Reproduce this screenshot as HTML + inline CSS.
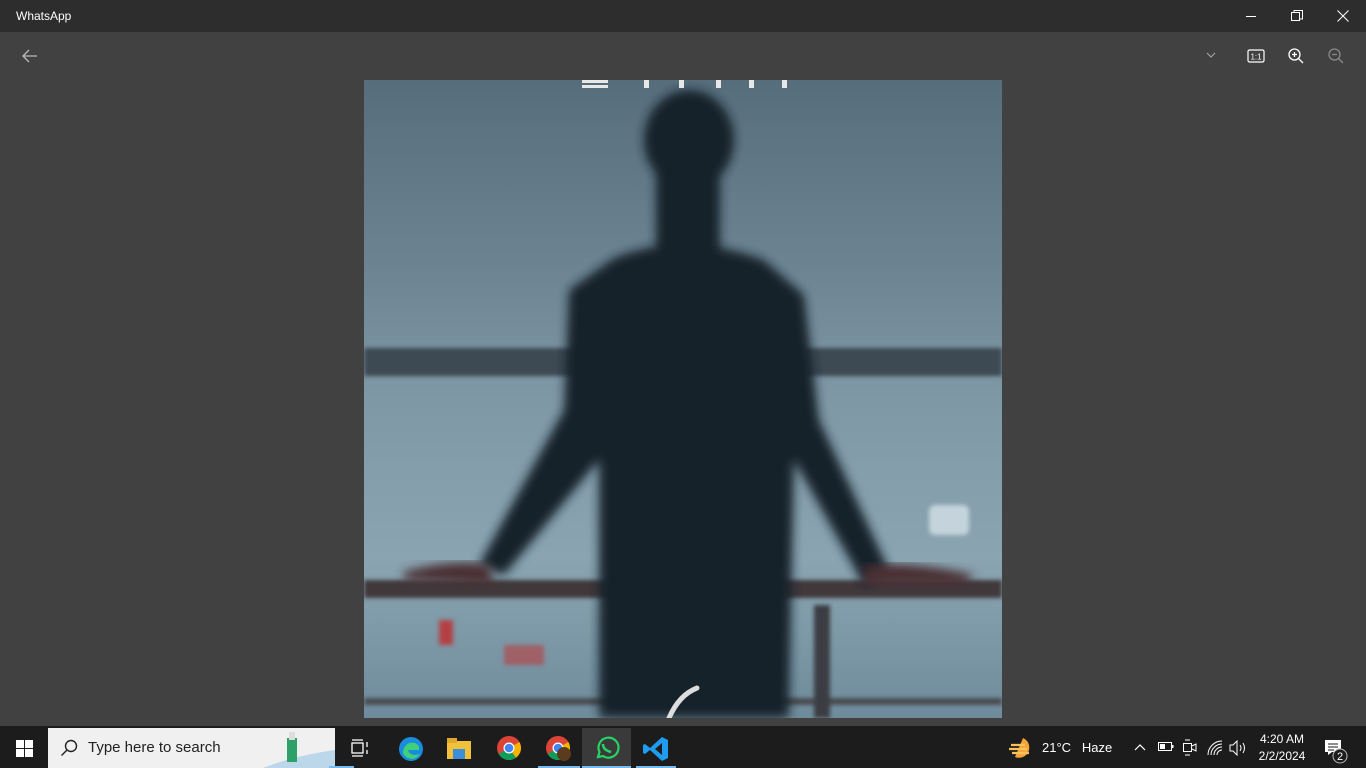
<!DOCTYPE html>
<html><head><meta charset="utf-8"><style>
*{margin:0;padding:0;box-sizing:border-box}
body{width:1366px;height:768px;overflow:hidden;background:#404040;font-family:"Segoe UI","Liberation Sans",sans-serif;position:relative}
.title{position:absolute;left:0;top:0;width:1366px;height:32px;background:#2d2d2d;color:#fff;font-size:12px}
.title span{position:absolute;left:16px;top:9px}
.main{position:absolute;left:0;top:32px;width:1366px;height:694px;background:#414141}
.photo{position:absolute;left:364px;top:80px;width:638px;height:638px}
.tb{position:absolute;left:0;top:726px;width:1366px;height:42px;background:#1c1c1c}
.search{position:absolute;left:48px;top:728px;width:287px;height:40px;background:#f0f0f0;color:#222;font-size:15px;overflow:hidden}
.search span{position:absolute;left:40px;top:11px}
.ic{position:absolute}
.w{color:#fff;font-size:13px;position:absolute}
</style></head><body>
<div class="title"><span>WhatsApp</span>
<svg class="ic" style="left:1246px;top:16px" width="10" height="2"><rect width="10" height="1" fill="#fff"/></svg>
<svg class="ic" style="left:1291px;top:10px" width="12" height="12" fill="none" stroke="#fff"><rect x="0.5" y="2.5" width="8" height="8"/><path d="M3 2.5V0.5H11.5V9H9"/></svg>
<svg class="ic" style="left:1337px;top:10px" width="12" height="12" stroke="#fff"><path d="M0.5 0.5L11.5 11.5M11.5 0.5L0.5 11.5"/></svg>
</div>
<div class="main"></div>
<svg class="ic" style="left:22px;top:49px" width="16" height="14" fill="none" stroke="#bbb" stroke-width="1.3"><path d="M7 1L1 7L7 13M1 7H15"/></svg>
<svg class="ic" style="left:1206px;top:52px" width="10" height="6" fill="none" stroke="#aaa"><path d="M1 1L5 5L9 1"/></svg>
<svg class="ic" style="left:1247px;top:49px" width="18" height="14" fill="none" stroke="#fff" stroke-width="1.2"><rect x="1" y="1" width="16" height="12" rx="1.5"/><text x="9" y="10.5" fill="#fff" stroke="none" font-size="8" text-anchor="middle" font-family="Liberation Sans">1:1</text></svg>
<svg class="ic" style="left:1288px;top:48px" width="16" height="16" fill="none" stroke="#fff" stroke-width="1.3"><circle cx="6.5" cy="6.5" r="5.5"/><path d="M10.5 10.5L15 15M4 6.5H9M6.5 4V9"/></svg>
<svg class="ic" style="left:1328px;top:48px" width="16" height="16" fill="none" stroke="#888" stroke-width="1.3"><circle cx="6.5" cy="6.5" r="5.5"/><path d="M10.5 10.5L15 15M4 6.5H9"/></svg>

<svg class="photo" viewBox="0 0 638 638">
<defs>
<linearGradient id="bg" x1="0" y1="0" x2="0" y2="1"><stop offset="0" stop-color="#566d7b"/><stop offset="0.3" stop-color="#6d8593"/><stop offset="0.5" stop-color="#7f98a5"/><stop offset="0.75" stop-color="#8aa4b1"/><stop offset="1" stop-color="#6f8c9c"/></linearGradient>
<filter id="bl"><feGaussianBlur stdDeviation="5"/></filter>
<filter id="bl2"><feGaussianBlur stdDeviation="2"/></filter>
</defs>
<rect width="638" height="638" fill="url(#bg)"/>
<g filter="url(#bl2)">
<rect x="0" y="268" width="638" height="28" fill="#3e4a52"/>
<rect x="0" y="500" width="638" height="18" fill="#40393a"/>
<rect x="0" y="618" width="638" height="7" fill="#4a4b4f"/>
<rect x="450" y="525" width="16" height="113" fill="#3a3d42"/>
<rect x="565" y="425" width="40" height="30" rx="6" fill="#c5d4dc"/>
<rect x="75" y="540" width="14" height="25" fill="#c02a2a" opacity="0.8"/>
<rect x="140" y="565" width="40" height="20" fill="#b83a3a" opacity="0.6"/>
</g>
<g filter="url(#bl)" fill="#13202b">
<ellipse cx="325" cy="60" rx="45" ry="50"/>
<rect x="292" y="90" width="64" height="80"/>
<path d="M250 178 Q320 150 400 180 L440 215 L455 340 L525 490 L500 505 L430 380 L425 638 L235 638 L235 380 L140 495 L115 485 L200 330 L205 210 Z"/>
</g>
<path d="M40 492 Q90 478 125 485 L130 505 L40 500 Z" fill="#4a2e33" filter="url(#bl)"/>
<path d="M500 486 Q545 480 610 495 L600 505 L500 505 Z" fill="#4a2e33" filter="url(#bl)"/>
<path d="M305 638 Q315 615 333 608" fill="none" stroke="#ddd" stroke-width="5" stroke-linecap="round"/>
<g fill="#e8e8e8"><rect x="218" y="0" width="26" height="3"/><rect x="218" y="5" width="26" height="3"/><rect x="280" y="0" width="5" height="8"/><rect x="315" y="0" width="5" height="8"/><rect x="352" y="0" width="5" height="8"/><rect x="385" y="0" width="5" height="8"/><rect x="418" y="0" width="5" height="8"/></g>
</svg>

<div class="tb"></div>
<svg class="ic" style="left:16px;top:740px" width="17" height="17" fill="#fff"><rect x="0" y="0" width="8" height="8"/><rect x="9" y="0" width="8" height="8"/><rect x="0" y="9" width="8" height="8"/><rect x="9" y="9" width="8" height="8"/></svg>
<div class="search"><svg class="ic" style="left:12px;top:11px" width="18" height="18" fill="none" stroke="#222" stroke-width="1.4"><circle cx="11" cy="7" r="5.5"/><path d="M7 11L1.5 16.5"/></svg><span>Type here to search</span>
<svg class="ic" style="left:215px;top:0" width="72" height="40"><path d="M0 40 Q30 28 72 22 L72 40Z" fill="#bcd6ea"/><rect x="24" y="10" width="10" height="24" fill="#2ea06a"/><rect x="26" y="4" width="6" height="8" fill="#ddd"/></svg></div>
<svg class="ic" style="left:351px;top:739px" width="20" height="18" fill="none" stroke="#fff" stroke-width="1.3"><rect x="1" y="4" width="11" height="10"/><path d="M1 1H12M1 17H12M16 3V8M16 11V15"/></svg>
<svg class="ic" style="left:398px;top:736px" width="26" height="26"><circle cx="13" cy="13" r="12" fill="#1b8be0"/><path d="M5 15 Q8 5 17 7 Q22 9 21 14 L10 14 Q12 21 22 18 Q17 25 10 22 Q4 19 5 15Z" fill="#3fd07a"/></svg>
<svg class="ic" style="left:447px;top:738px" width="24" height="22"><rect x="0" y="3" width="24" height="18" fill="#f2c13a"/><rect x="0" y="0" width="10" height="5" fill="#e0a82a"/><rect x="6" y="11" width="12" height="10" fill="#3a8fd8"/></svg>
<svg class="ic" style="left:496px;top:735px" width="26" height="26"><circle cx="13" cy="13" r="12" fill="#db4437"/><path d="M13 13 L2.6 19 A12 12 0 0 0 20 22.7Z" fill="#0f9d58"/><path d="M13 13 L20 22.7 A12 12 0 0 0 23.4 7Z" fill="#f4b400"/><circle cx="13" cy="13" r="5.5" fill="#fff"/><circle cx="13" cy="13" r="4.3" fill="#4285f4"/></svg>
<svg class="ic" style="left:545px;top:735px" width="26" height="26"><circle cx="13" cy="13" r="12" fill="#db4437"/><path d="M13 13 L2.6 19 A12 12 0 0 0 20 22.7Z" fill="#0f9d58"/><path d="M13 13 L20 22.7 A12 12 0 0 0 23.4 7Z" fill="#f4b400"/><circle cx="13" cy="13" r="5.5" fill="#fff"/><circle cx="13" cy="13" r="4.3" fill="#4285f4"/><circle cx="19" cy="19" r="7" fill="#5a3b1e"/></svg>
<div style="position:absolute;left:582px;top:728px;width:49px;height:40px;background:#3a3a3a"></div>
<svg class="ic" style="left:594px;top:735px" width="26" height="26" fill="none" stroke="#25d366" stroke-width="2.2"><path d="M4 22 L5.5 17 A10 10 0 1 1 9 21 Z"/><path d="M9 9 Q9 15 17 17" stroke-width="2.5"/></svg>
<svg class="ic" style="left:643px;top:736px" width="26" height="26"><path d="M19 1 L25 4 V22 L19 25 L7 14 L2 18 L0 17 V9 L2 8 L7 12Z M19 7 L12 13 L19 19Z" fill="#1f9cf0" fill-rule="evenodd"/></svg>
<div style="position:absolute;left:538px;top:766px;width:42px;height:2px;background:#76b9ed"></div>
<div style="position:absolute;left:582px;top:766px;width:49px;height:2px;background:#76b9ed"></div>
<div style="position:absolute;left:636px;top:766px;width:40px;height:2px;background:#76b9ed"></div>
<div style="position:absolute;left:329px;top:766px;width:25px;height:2px;background:#76b9ed"></div>

<svg class="ic" style="left:1009px;top:737px" width="26" height="22"><path d="M14 1 A10 10 0 1 1 6 20 Z" fill="#f4a53a"/><g stroke="#f7c25a" stroke-width="2.2"><path d="M2 8H16M0 12H18M3 16H20"/></g></svg>
<div class="w" style="left:1042px;top:740px">21°C&nbsp;&nbsp; Haze</div>
<svg class="ic" style="left:1134px;top:743px" width="12" height="8" fill="none" stroke="#fff" stroke-width="1.2"><path d="M1 7L6 2L11 7"/></svg>
<svg class="ic" style="left:1158px;top:742px" width="16" height="10" fill="none" stroke="#fff"><rect x="0.5" y="0.5" width="13" height="8"/><rect x="2" y="2" width="5" height="5" fill="#fff" stroke="none"/><rect x="14" y="3" width="1.5" height="3" fill="#fff" stroke="none"/></svg>
<svg class="ic" style="left:1183px;top:739px" width="14" height="17" fill="none" stroke="#fff"><rect x="0.5" y="4.5" width="8" height="8"/><path d="M9 7L13 5V12L9 10M2 1H7M2 16H7"/></svg>
<svg class="ic" style="left:1207px;top:740px" width="16" height="16" fill="none" stroke="#fff"><path d="M1 15A14 14 0 0 1 15 1M4 15A11 11 0 0 1 15 4M7 15A8 8 0 0 1 15 7M10 15A5 5 0 0 1 15 10"/></svg>
<svg class="ic" style="left:1229px;top:740px" width="18" height="16" fill="none" stroke="#fff"><path d="M1 5H4L8 1V15L4 11H1Z M11 5Q13 8 11 11 M14 3Q17 8 14 13"/></svg>
<div class="w" style="left:1258px;top:731px;font-size:12px;text-align:center;width:48px;line-height:17px">4:20 AM<br>2/2/2024</div>
<svg class="ic" style="left:1324px;top:739px" width="26" height="26"><path d="M1 1H17V13H8L4 16V13H1Z" fill="#fff"/><path d="M4 5H14M4 8H14M4 11H10" stroke="#1c1c1c"/><circle cx="16" cy="17" r="7" fill="#1c1c1c" stroke="#bbb"/><text x="16" y="21" fill="#fff" font-size="11" text-anchor="middle" font-family="Liberation Sans">2</text></svg>
</body></html>
